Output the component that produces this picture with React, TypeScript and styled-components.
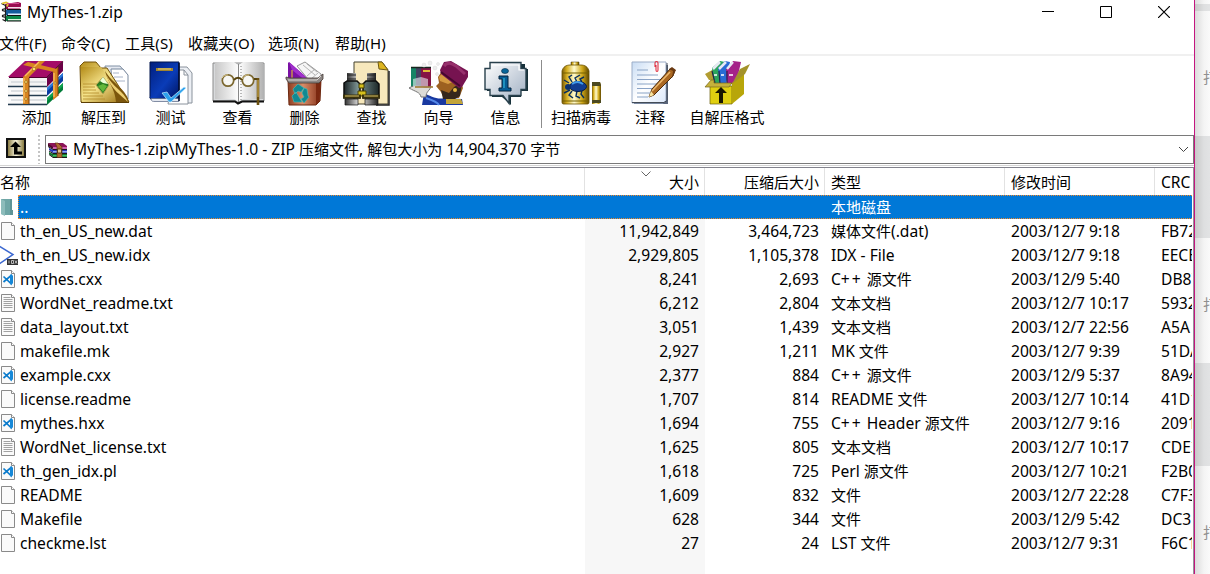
import React from 'react';
import styled, { createGlobalStyle } from 'styled-components';

const Global = createGlobalStyle`
  * { box-sizing: border-box; }
  body { margin: 0; background: #fff; overflow: hidden; }
  svg { display: block; flex: none; }
`;

const Desktop = styled.div`
  display: flex;
  width: 1210px;
  height: 574px;
  overflow: hidden;
  font: 15px/24px "Noto Sans", "Noto Sans CJK SC", sans-serif;
  color: #000;
`;
const Window = styled.div`
  width: 1195px;
  height: 574px;
  border-right: 1px solid #c4157f;
  background: #fff;
  display: flex;
  flex-direction: column;
  overflow: hidden;
`;
const TitleBar = styled.div`
  height: 30px;
  display: flex;
  align-items: flex-start;
`;
const Title = styled.div`
  margin-left: 4px;
  flex: 1;
  line-height: 25px;
`;
const Controls = styled.div`
  display: flex;
  gap: 46px;
  padding: 6px 24px 0 0;
`;
const MenuBar = styled.div`
  display: grid;
  grid-template-columns: 62px 64px 63px 80px 67px 70px;
  height: 26px;
  margin-left: -1px;
  line-height: 26px;
  border-bottom: 2px solid #f0f0f0;
  white-space: nowrap;
`;
const MenuItem = styled.div`
  letter-spacing: 0.15px;
`;
const Toolbar = styled.div`
  display: flex;
  height: 77px;
  padding: 4px 0 0 3px;
`;
const ToolButton = styled.div<{ $w: number }>`
  width: ${(p) => p.$w}px;
  display: flex;
  flex-direction: column;
  align-items: center;
  line-height: 22px;
  white-space: nowrap;
`;
const ToolSeparator = styled.div`
  width: 1px;
  height: 68px;
  margin: 0 2px;
  background: #8c8c8c;
`;
const AddressBar = styled.div`
  display: flex;
  height: 33px;
  padding: 2px 0 0 6px;
  border-bottom: 1px solid #d4d4d4;
`;
const UpArrow = styled.svg`
  margin-top: 3px;
`;
const Grip = styled.div`
  width: 2px;
  height: 29px;
  margin: 0 5px 0 12px;
  background: repeating-linear-gradient(#c4c4c4 0 2px, #fff 2px 4px);
`;
const AddressBox = styled.div`
  flex: 1;
  height: 29px;
  border: 1px solid #7a7a7a;
  display: flex;
  align-items: center;
  padding: 0 4px 0 2px;
`;
const AddressText = styled.div`
  flex: 1;
  margin: 0 0 2px 5px;
  white-space: pre;
`;
const List = styled.div`
  flex: 1;
  margin-top: 1px;
  border-top: 1px solid #82828c;
  border-right: 1px solid #96919a;
  padding-right: 1px;
  display: flex;
  flex-direction: column;
`;
const HeaderRow = styled.div`
  display: grid;
  grid-template-columns: 585px 120px 120px 180px 150px 1fr;
  height: 27px;
  overflow: hidden;
`;
const HeaderCell = styled.div<{ $right?: boolean; $first?: boolean; $last?: boolean }>`
  position: relative;
  border-right: ${(p) => (p.$last ? 0 : 1)}px solid #e2e2e2;
  padding: 2px ${(p) => (p.$last ? 0 : 5)}px 0 ${(p) => (p.$first ? 0 : 6)}px;
  line-height: 24px;
  text-align: ${(p) => (p.$right ? 'right' : 'left')};
  white-space: nowrap;
`;
const SortMark = styled.svg`
  position: absolute;
  left: 56px;
  top: 3px;
`;
const Body = styled.div`
  flex: 1;
  background: linear-gradient(90deg, #fff 585px, #f7f7f7 585px 705px, #fff 705px);
`;
const Row = styled.div`
  display: grid;
  grid-template-columns: 18px 567px 120px 120px 180px 150px 1fr;
  height: 24px;
`;
const ParentRow = styled.div`
  display: flex;
  height: 24px;
`;
const Selected = styled.div`
  flex: 1;
  display: flex;
  background: #0078d7;
  border: 1px dotted #f58a28;
  border-right: 0;
  color: #fff;
  line-height: 23px;
`;
const ParentName = styled.div`
  width: 812px;
  padding-left: 1px;
`;
const Cell = styled.div<{ $right?: boolean; $name?: boolean }>`
  padding: 0 ${(p) => (p.$right ? 6 : 0)}px 0 ${(p) => (p.$name ? 2 : 6)}px;
  text-align: ${(p) => (p.$right ? 'right' : 'left')};
  white-space: pre;
  overflow: hidden;
`;
const Latin = styled.span<{ $plus?: boolean }>`
  font-size: 15.6px;
  letter-spacing: ${(p) => (p.$plus ? 2 : 0)}px;
`;
const Behind = styled.div`
  width: 15px;
  display: flex;
  flex-direction: column;
  background: #e0e0e0;
`;
const Strip = styled.div<{ $h: number; $dark?: boolean; $drop?: number }>`
  height: ${(p) => p.$h}px;
  background: linear-gradient(90deg, ${(p) => (p.$dark ? '#c8c8c8, #dedfe0 60%, #e2e3e4' : '#dcdcdc, #f4f4f4 60%, #fafafa')});
  display: flex;
  align-items: center;
  padding: ${(p) => p.$drop ?? 0}px 0 0 8px;
  overflow: hidden;
  color: #909090;
  white-space: nowrap;
`;

/* Latin runs are set slightly larger than the Chinese ones, and plus signs wider. */
function T({ children }: { children: string }) {
  const runs = children.split(/(\++|[\x20-\x2a\x2c-\x7e]+)/).filter(Boolean);
  return (
    <>
      {runs.map((r, i) => (/^[\x20-\x7e]/.test(r) ? <Latin key={i} $plus={r[0] === '+'}>{r}</Latin> : <span key={i}>{r}</span>))}
    </>
  );
}

const Defs = styled.svg`
  position: absolute;
`;
const Gradients = () => (
  <Defs width="0" height="0">
    <defs>
      <linearGradient id="gold" x1="0" y1="0" x2="1" y2="1">
        <stop offset="0" stopColor="#b48c18" /><stop offset=".45" stopColor="#f6e48c" /><stop offset="1" stopColor="#96690a" />
      </linearGradient>
      <linearGradient id="khaki" x1="0" x2="1">
        <stop offset="0" stopColor="#8a7c44" /><stop offset=".5" stopColor="#f8f4dc" /><stop offset="1" stopColor="#877a40" />
      </linearGradient>
      <linearGradient id="tank" x1="0" x2="1">
        <stop offset="0" stopColor="#7a5c08" /><stop offset=".18" stopColor="#d8b020" /><stop offset=".45" stopColor="#fffbd0" /><stop offset=".75" stopColor="#d0a818" /><stop offset="1" stopColor="#5e4600" />
      </linearGradient>
      <linearGradient id="navy" x1="0" y1="0" x2="1" y2="1">
        <stop offset="0" stopColor="#001e7c" /><stop offset=".55" stopColor="#0a3cb8" /><stop offset="1" stopColor="#001460" />
      </linearGradient>
      <linearGradient id="steel" x1="0" x2="1">
        <stop offset="0" stopColor="#1c2426" /><stop offset=".4" stopColor="#7c9494" /><stop offset="1" stopColor="#1c2828" />
      </linearGradient>
      <linearGradient id="chrome" x1="0" x2="1">
        <stop offset="0" stopColor="#333" /><stop offset=".45" stopColor="#eee" /><stop offset="1" stopColor="#222" />
      </linearGradient>
      <linearGradient id="page" x1="0" x2="1">
        <stop offset="0" stopColor="#c8c8c8" /><stop offset=".5" stopColor="#fff" /><stop offset="1" stopColor="#b4b4b4" />
      </linearGradient>
      <linearGradient id="copper" x1="0" x2="1">
        <stop offset="0" stopColor="#8c3c20" /><stop offset=".45" stopColor="#d88c68" /><stop offset="1" stopColor="#843018" />
      </linearGradient>
      <linearGradient id="glass" x1="0" y1="0" x2="1" y2="1">
        <stop offset="0" stopColor="#fff" /><stop offset="1" stopColor="#9cacc0" />
      </linearGradient>
      <linearGradient id="sheet" x1="0" y1="0" x2="1" y2="1">
        <stop offset="0" stopColor="#c8dcf4" /><stop offset=".5" stopColor="#fff" /><stop offset="1" stopColor="#dce8fa" />
      </linearGradient>
    </defs>
  </Defs>
);

const AddArt = () => (
  <>
    <path d="M7 99h39v6H7z" fill="#e8eaec" /><path d="M46 98l16-15v7l-16 15z" fill="#007c38" />
    <path d="M46 98l16-15v3l-16 15z" fill="#10a450" />
    <path d="M7 88h39v8H7zM7 97h39v6H7z" fill="#fafafa" /><path d="M46 88l16-15v8l-16 15z" fill="#0a3ca0" /><path d="M46 88l16-15v3L46 91z" fill="#2878d8" />
    <path d="M7 78h39v8H7z" fill="#f4f4f4" /><path d="M46 78l16-16v9L46 87z" fill="#6c0048" />
    <path d="M7 77l17-16h38L46 78z" fill="#a40c68" /><path d="M8 77.500h38l16-16" fill="none" stroke="#50002e" strokeWidth="1.2" />
    <path d="M7 86.500h39M7 95.500h39M7 104.500h39" stroke="#243c50" strokeWidth="1.3" /><path d="M10 82h35M10 91h35M10 100h35" stroke="#d4d8dc" strokeWidth="1.5" />
    <path d="M22 77l16-16h6L28 77v27h-6zM27 62l29 7-3 3-31-7zM52 72l5-5v29l-5 4z" fill="#d88420" />
    <path d="M23 78v25M24 76l14-14M53 73v24" stroke="#f8bc60" strokeWidth="1.4" />
    <path d="M28 78v26M57 67v29" stroke="#7c4008" />
    <g fill="#fce070" stroke="#8a5410" strokeWidth=".6"><circle cx="25" cy="82" r="1.4" /><circle cx="25" cy="91" r="1.4" /><circle cx="25" cy="99" r="1.4" /><circle cx="33" cy="69" r="1.8" /><circle cx="54" cy="83" r="1.2" /></g>
  </>
);
const ExtractArt = () => (
  <>
    <path d="M104 66h15l6 7v26h-18z" fill="#e4e8f0" stroke="#8090a4" /><path d="M110 69h12l5 6v24h-15z" fill="#fff" stroke="#77879c" />
    <path d="M112 73h6M113 77h9M113 81h11" stroke="#a8b4c8" />
    <path d="M79 66l4-4h12l5 6h6l22 34H80z" fill="url(#gold)" stroke="#73530a" />
    <path d="M80 67h20l4 6 23 29H81z" fill="url(#gold)" /><path d="M104 71c3 12 10 17 11 31h13c-2-12-16-18-24-31z" fill="#7c560c" /><path d="M105 74c6 13 18 17 22 28-7-7-17-12-22-28z" fill="#edcf72" />
    <path d="M82 84h14M82 87h12M82 90h13M82 93h16M82 96h20M82 99h22" stroke="#b28a28" strokeWidth=".8" />
    <path d="M80 102.500h48" stroke="#5b3d04" />
    <path d="M95 85l7-8 6 8-6 9z" fill="#287c20" stroke="#b0a450" /><path d="M99 81l3-4 5 7-5-1z" fill="#edffd8" /><path d="M97 86l5-2 4 2-4 6z" fill="#62b83c" />
  </>
);
const TestArt = () => (
  <>
    <path d="M178 67h8l5 6v30h-22z" fill="#eceff4" stroke="#8a929c" /><path d="M174 70h9l4 5v29h-20z" fill="#fff" stroke="#8a929c" /><path d="M183 70v5h4" fill="none" stroke="#8a929c" />
    <path d="M149 62h29v37h-27c-3 0-2-2-2-3z" fill="url(#navy)" stroke="#00144c" /><path d="M150 98.500c0 3 2 3 4 3h24v-3z" fill="#e4e8f0" stroke="#526080" strokeWidth=".7" />
    <path d="M178 63v38" stroke="#000c30" strokeWidth="1.5" /><path d="M155 69.500h17" stroke="#a08430" strokeWidth="3" /><path d="M157 69h13" stroke="#e8d478" />
    <path d="M161 93l5-1 4 6 13-11 2 1-15 14h-2z" fill="#2ca0ec" stroke="#c4ebff" strokeWidth=".7" />
  </>
);
const ViewArt = () => (
  <>
    <path d="M212 63v38h22l4 2 4-2h21V63z" fill="#d8dadc" stroke="#8a8a8a" />
    <path d="M214 62h19l4 3v36l-4-2h-19zM238 65l4-3h20v37h-20l-4 2z" fill="url(#page)" /><path d="M237.500 64v38" stroke="#888" /><path d="M240 66v34" stroke="#777" strokeDasharray="1 2" />
    <path d="M212 101.500h22l3 2 4-2h22" fill="none" stroke="#111" strokeWidth="2" />
    <g fill="#f7f7f4" stroke="#7c6830" strokeWidth="1.7"><circle cx="227" cy="80.500" r="5.700" /><circle cx="247" cy="80.500" r="5.700" /></g>
    <path d="M233 80c2-3 6-3 8 0M253 79h5" fill="none" stroke="#55420c" strokeWidth="2" /><path d="M221 78c2-3 5-3 6-3M241 79c2-4 5-4 7-4" fill="none" stroke="#e5d398" />
    <path d="M257 78v27" stroke="#6b5010" strokeWidth="2.600" /><path d="M257 80v17" stroke="#d9b85b" />
  </>
);
const DeleteArt = () => (
  <>
    <path d="M287 81V63l1-1 22 19z" fill="#7a10a4" /><path d="M288 62l20 18-3 1-14-11z" fill="#a030cc" /><path d="M291 70v10" stroke="#ebd020" />
    <path d="M296 66l8-4 16 12 1 6h-13z" fill="#f6f6f6" stroke="#999" /><path d="M302 65l12 10M306 64l10 8M306 76l8-7M310 79l7-6" stroke="#a4a4a4" strokeWidth=".8" />
    <path d="M287 80h33l-1 21-4 4h-27z" fill="url(#copper)" stroke="#6c2810" /><path d="M315 82l5-2-2 22-3 3z" fill="#7b2810" />
    <path d="M285 77l4 1h28l5-4v5l-4 4h-30l-3-4z" fill="#8c8684" stroke="#473c38" strokeWidth=".8" /><path d="M287 80h29l4-4" fill="none" stroke="#d8d4d0" />
    <path d="M292 89l5-5 6 4-3 4-3-1-3 3zM291 96l4-4 3 5 3 5h-8zM303 88l3 1 1 7 1 1-5 6-3-4 3-2-2-4z" fill="#128992" stroke="#48bdb8" strokeWidth=".6" />
  </>
);
const FindArt = () => (
  <>
    <path d="M353 62h28l6 8v34h-34z" fill="#f7e8bc" stroke="#42402f" /><path d="M377 62h4l6 8-9-1z" fill="#ddb520" stroke="#6f5a12" /><path d="M388 71v34h-13" fill="none" stroke="#222" strokeWidth="1.500" />
    <path d="M346 73h9v9h-9zM366 73h9v9h-9z" fill="url(#chrome)" /><path d="M346 75h9M366 75h9M346 79h9M366 79h9" stroke="#222" />
    <path d="M343 83l3-2h10l3 3v14h-16zM362 84l3-3h10l3 3v14h-16z" fill="url(#steel)" stroke="#0c0c0c" strokeWidth="1.500" />
    <path d="M358 84h5v4h-5zM357 91h8v5h-8z" fill="#d7c01c" stroke="#484000" /><path d="M342 96.500h18M361 96.500h18" stroke="#3c340c" strokeWidth="4" /><path d="M344 96h14M363 96h14" stroke="#d9c36a" />
    <path d="M344 99h13v6h-13zM364 99h13v6h-13z" fill="url(#chrome)" stroke="#111" strokeWidth=".700" />
  </>
);
const WizardArt = () => (
  <>
    <path d="M421 105l2-12c6 3 14 7 20 5l18 1 1 6z" fill="#1838a0" /><path d="M425 98c6 2 12 5 13 7" stroke="#5488e8" strokeWidth="2" fill="none" />
    <path d="M437 77l6-9 14 7 5 13-4 10h-15l-3-6-5-6 3-3z" fill="#9c6120" /><path d="M438 77l5-6 10 5 1 5-7 3-8-3z" fill="#d59b42" />
    <path d="M440 90l8 3 5-6 8-5-2 14-5 3h-12z" fill="#35271c" /><circle cx="454" cy="90" r="2" fill="#e8b840" />
    <path d="M439 70l4-8 7-1 17 10v6l-6 10-3 1-18-14z" fill="#761350" /><path d="M443 66c3-4 8-3 12 0l9 8" fill="none" stroke="#97306c" strokeWidth="3" /><path d="M440 72l19 14" stroke="#45072f" strokeWidth="2" />
    <path d="M445 99h15l2 5h-17z" fill="#c2a43a" />
    <path d="M410 67h5v20h-5z" fill="#168465" /><path d="M415 67h5v20h-5z" fill="#424260" /><path d="M420 67h10v20h-10z" fill="#851545" /><path d="M410 67.500h20" stroke="#18251f" strokeWidth="1.500" /><path d="M422 71h7" stroke="#e1bd38" strokeWidth="2" />
    <path d="M408 88c7-5 16 1 22-2-1 5-5 5-5 11h-5c-1-5-5-5-12-9z" fill="#dddcd8" stroke="#777" /><path d="M412 79l8-2 7 2v8h-15z" fill="#e8eef4" opacity=".6" />
    <path d="M414 87h18" stroke="#9e752a" strokeWidth="1.500" /><g fill="#eee" stroke="#ddd" strokeWidth=".5"><circle cx="423" cy="65" r="2" /><circle cx="429" cy="63" r="2" /><circle cx="434" cy="68" r="2" /><circle cx="437" cy="64" r="1.500" /><circle cx="436" cy="74" r="1.500" /></g>
  </>
);
const InfoArt = () => (
  <>
    <path d="M491 64h33v5h3v22h-7v6h-10v8l-9-8h-10v-6h-5V71h5z" fill="#17313a" />
    <path d="M489 62.500h31v6h5v21h-5v6h-12v8l-6-8h-13v-6h-5v-21h5z" fill="url(#glass)" stroke="#28404c" strokeWidth="1.400" />
    <path d="M491 65h27v5h5" fill="none" stroke="#fff" strokeWidth="1.200" />
    <ellipse cx="504" cy="71" rx="3.500" ry="2.500" fill="#08669a" stroke="#05243c" strokeWidth=".6" /><path d="M498 76h9v12h3v3h-12v-3h3v-9h-3z" fill="#075c94" stroke="#04233c" />
    <path d="M503 78v10" stroke="#26a3ce" strokeWidth="1.500" />
  </>
);
const VirusArt = () => (
  <>
    <path d="M572 62h8v5h-8z" fill="url(#tank)" stroke="#453500" strokeWidth=".5" /><path d="M563 71c1-4 4-6 8-6h11c4 0 7 2 8 6v31c0 2-1 2-2 2h-23c-1 0-2 0-2-2z" fill="url(#tank)" stroke="#6a5000" strokeWidth=".8" />
    <path d="M563 73h27M563 101h27" stroke="#756100" strokeWidth="1.200" />
    <path d="M593 82h8l1 3v17l-2 2h-7z" fill="url(#tank)" /><path d="M593 82h8l1 4h-9zM593 100h9v3h-9z" fill="#4c4920" />
    <path d="M570 83l-5-3M571 90l-6 3M573 82l-3-5 3-2M578 82l-2-4 5-3M583 82l-2-3 4-2M573 91l-3 4 4 3M578 91l-1 5 4 2M583 91l-1 3 3 4" fill="none" stroke="#082f5f" strokeWidth="1.400" />
    <ellipse cx="579" cy="86.500" rx="8.500" ry="5" fill="#123d90" stroke="#031945" /><circle cx="569" cy="87" r="3" fill="#0c326f" /><path d="M573 84c4-3 8-2 11 0" stroke="#429bea" strokeWidth="2" fill="none" />
  </>
);
const CommentArt = () => (
  <>
    <path d="M635 65h34v39h-34z" fill="#59657a" /><path d="M633 62h34v39l-3 2h-31z" fill="url(#sheet)" stroke="#9cadc7" /><path d="M633 102.500h32l3-2V63" fill="none" stroke="#444c58" />
    <path d="M638 70h11M638 75h21M638 79.500h23M638 84h22M638 88.500h16M638 93h13M638 97h11" stroke="#8aa3c6" strokeWidth="1.200" />
    <path d="M656 67v-4c0-2 3-2 3 0v7c0 2-2 2-2 0v-5" fill="none" stroke="#e03040" strokeWidth="1.100" />
    <path d="M650 97l3-8 18-20 5 1-2 6-19 19z" fill="#aa6822" stroke="#4b2a0b" /><path d="M653 91l18-19" stroke="#edb96d" strokeWidth="1.500" /><path d="M670 69l3-2 4 3-4 8 1-7z" fill="#6a3a12" /><path d="M650 97l2-6 3 4z" fill="#fae5a0" />
  </>
);
const SfxArt = () => (
  <>
    <path d="M706 74l9-5v11h-5z" fill="#b29c31" />
    <path d="M713 68l8-7 5 1-3 22h-8z" fill="#2ba45c" /><path d="M719 68l7-7 5 1-4 23h-6z" fill="#286bd4" /><path d="M727 69l7-8 8 1-5 22h-9z" fill="#a52189" />
    <path d="M714 69l7-7M720 69l7-7M728 69l6-7" stroke="#e7e8f3" strokeWidth="2.500" /><path d="M713 71l3 12M720 71l1 13M728 71l0 14" stroke="#23244c" strokeWidth="1.200" /><path d="M715 75h3M722 75h3M730 75h4" stroke="#fff" strokeWidth="1.500" />
    <path d="M711 86h22v18h-22z" fill="#e0cf10" stroke="#675b0c" strokeWidth=".7" /><path d="M733 83l12-10v21l-12 10z" fill="#b8a60a" /><path d="M706 87l6-7h3v3h18l-3 4z" fill="#c6b13b" stroke="#75671a" strokeWidth=".7" />
    <path d="M733 84l8-15 10-5-5 10z" fill="#a3922a" /><path d="M722 87l6 6h-4v10h-4V93h-4z" fill="#191600" />
  </>
);

const tools = [
  { label: '添加', c: 36, w: 67, art: AddArt },
  { label: '解压到', c: 103, w: 67, art: ExtractArt },
  { label: '测试', c: 170, w: 67, art: TestArt },
  { label: '查看', c: 237, w: 67, art: ViewArt },
  { label: '删除', c: 304, w: 67, art: DeleteArt },
  { label: '查找', c: 371, w: 67, art: FindArt },
  { label: '向导', c: 438, w: 67, art: WizardArt },
  { label: '信息', c: 505, w: 67, art: InfoArt },
];
const extraTools = [
  { label: '扫描病毒', c: 582, w: 74, art: VirusArt },
  { label: '注释', c: 651, w: 64, art: CommentArt },
  { label: '自解压格式', c: 728, w: 90, art: SfxArt },
];

function Tool({ label, c, w, art: Art }: (typeof tools)[number]) {
  return (
    <ToolButton $w={w}>
      <svg width="60" height="46" viewBox={`${c - 30} 60 60 46`}><Art /></svg>
      {label}
    </ToolButton>
  );
}

const BooksIcon = () => (
  <svg width="23" height="23" viewBox="0 0 23 23">
    <path d="M5 4l13-2 3 1v3l-1 3H6z" fill="#980c50" /><path d="M8 7h13v1.500H8z" fill="#f4dcea" />
    <path d="M5 9l3 1h13v5H6z" fill="#145c9c" /><path d="M8 13.500h13V15H8z" fill="#dcecff" />
    <path d="M5 15l3 1h13v5H6z" fill="#0c8848" /><path d="M8 19h13v1.500H8z" fill="#d8f4dc" />
    <path d="M7 9.500h14M7 15.500h14M7 21h14" stroke="#111" strokeWidth="1.200" />
    <path d="M1.500 3.500l4 2v3l-3 1v1l3 1v3l-3 1v1l3 1v3.500l-3-1.500M5.500 5.500v15" fill="none" stroke="#1c1c1c" strokeWidth="1.200" />
    <path d="M2 3.500l4-1 2 1-1 3" fill="none" stroke="#e0c028" strokeWidth="1.800" /><path d="M7 3.500h12" stroke="#d04890" />
  </svg>
);
const ArchiveIcon = () => (
  <svg width="20" height="16" viewBox="0 0 20 16">
    <path d="M0 1h15l4 3v2H5z" fill="#8c1458" /><path d="M0 1l5 4v2L0 4z" fill="#50082c" /><path d="M5 5h14v2H5z" fill="#d060b0" />
    <path d="M1 6l4 2h14v3H5L1 8z" fill="#2838b8" /><path d="M5 9h14v1.500H5z" fill="#90a8f0" />
    <path d="M1 10l4 2h14v3H5l-4-3z" fill="#107030" /><path d="M5 13h14v1.500H5z" fill="#40c060" />
    <path d="M0 4.500l5 3h14M1 9l4 2.500h14M1 12.500l4 3h14" fill="none" stroke="#181818" />
    <path d="M7 1h3l4 4v10.500H9V5z" fill="#b06c30" stroke="#582c10" strokeWidth=".6" /><path d="M9.500 7h4v4h-4z" fill="#e8c888" stroke="#402408" strokeWidth=".8" />
  </svg>
);

const FileSvg = styled.svg`
  margin: 2px 0 0 0;
`;
function FileIcon({ kind }: { kind: string }) {
  if (kind === 'idx')
    return (
      <FileSvg width="18" height="22" viewBox="0 0 18 22">
        <path d="M-1 1L13 9.500L-1 19" fill="#fff" stroke="#3c68d0" strokeWidth="1.500" /><path d="M7 14h11v6H7z" fill="#333" />
        <path d="M9 15.500v3M11.500 15.500v3h2v-3zM15 15.500l2 3M17 15.500l-2 3" fill="none" stroke="#ddd" strokeWidth=".8" />
      </FileSvg>
    );
  return (
    <FileSvg width="18" height="20" viewBox="0 0 18 20">
      <path d="M1.500 1.500h10l3 3v14h-13z" fill="#fafafa" stroke="#8a8a8a" /><path d="M11.500 1.500v3h3" fill="#fff" stroke="#8a8a8a" />
      {kind === 'txt' && <path d="M3.500 4.500h7M3.500 6.500h9M3.500 8.500h9M3.500 10.500h9M3.500 12.500h9M3.500 14.500h9" stroke="#a2a2a2" />}
      {kind === 'code' && <path d="M3.500 7.500l7.500 7V6.500l-7.500 6.500" fill="none" stroke="#0a7bcc" strokeWidth="1.700" />}
      {kind === 'code' && <path d="M10 5.500l3 1v8l-3 1z" fill="#1688d8" />}
    </FileSvg>
  );
}

const files = [
  ['', 'th_en_US_new.dat', '11,942,849', '3,464,723', '媒体文件(.dat)', '2003/12/7 9:18', 'FB72'],
  ['idx', 'th_en_US_new.idx', '2,929,805', '1,105,378', 'IDX - File', '2003/12/7 9:18', 'EECE'],
  ['code', 'mythes.cxx', '8,241', '2,693', 'C++ 源文件', '2003/12/9 5:40', 'DB87'],
  ['txt', 'WordNet_readme.txt', '6,212', '2,804', '文本文档', '2003/12/7 10:17', '5932'],
  ['txt', 'data_layout.txt', '3,051', '1,439', '文本文档', '2003/12/7 22:56', 'A5A'],
  ['', 'makefile.mk', '2,927', '1,211', 'MK 文件', '2003/12/7 9:39', '51DA'],
  ['code', 'example.cxx', '2,377', '884', 'C++ 源文件', '2003/12/9 5:37', '8A94'],
  ['', 'license.readme', '1,707', '814', 'README 文件', '2003/12/7 10:14', '41D1'],
  ['code', 'mythes.hxx', '1,694', '755', 'C++ Header 源文件', '2003/12/7 9:16', '2091'],
  ['txt', 'WordNet_license.txt', '1,625', '805', '文本文档', '2003/12/7 10:17', 'CDE3'],
  ['code', 'th_gen_idx.pl', '1,618', '725', 'Perl 源文件', '2003/12/7 10:21', 'F2B0'],
  ['', 'README', '1,609', '832', '文件', '2003/12/7 22:28', 'C7F3'],
  ['', 'Makefile', '628', '344', '文件', '2003/12/9 5:42', 'DC3'],
  ['', 'checkme.lst', '27', '24', 'LST 文件', '2003/12/7 9:31', 'F6C1'],
];

export default function App() {
  return (
    <Desktop>
      <Global />
      <Gradients />
      <Window>
        <TitleBar>
          <BooksIcon />
          <Title><T>MyThes-1.zip</T></Title>
          <Controls>
            <svg width="12" height="12" viewBox="0 0 12 12"><path d="M0 5.500h12" stroke="#000" /></svg>
            <svg width="12" height="12" viewBox="0 0 12 12"><path d="M.5.5h11v11H.5z" fill="none" stroke="#000" /></svg>
            <svg width="12" height="12" viewBox="0 0 12 12"><path d="M0 0l12 12M12 0L0 12" stroke="#000" strokeWidth="1.200" /></svg>
          </Controls>
        </TitleBar>
        <MenuBar>
          {['文件(F)', '命令(C)', '工具(S)', '收藏夹(O)', '选项(N)', '帮助(H)'].map((m) => <MenuItem key={m}>{m}</MenuItem>)}
        </MenuBar>
        <Toolbar>
          {tools.map((t) => <Tool key={t.label} {...t} />)}
          <ToolSeparator />
          {extraTools.map((t) => <Tool key={t.label} {...t} />)}
        </Toolbar>
        <AddressBar>
          <UpArrow width="20" height="20" viewBox="0 0 20 20">
            <rect width="20" height="20" fill="#111" /><rect x="2" y="2" width="16" height="16" fill="url(#khaki)" />
            <path d="M9.500 3.500l5.500 5.500h-3.500v4.500H16v3H8V9H4z" fill="#000" />
          </UpArrow>
          <Grip />
          <AddressBox>
            <ArchiveIcon />
            <AddressText><T>MyThes-1.zip\MyThes-1.0 - ZIP 压缩文件, 解包大小为 14,904,370 字节</T></AddressText>
            <svg width="11" height="7" viewBox="0 0 11 7"><path d="M1 1l4.500 4.500L10 1" fill="none" stroke="#444" /></svg>
          </AddressBox>
        </AddressBar>
        <List>
          <HeaderRow>
            <HeaderCell $first>名称</HeaderCell>
            <HeaderCell $right>
              <SortMark width="10" height="6" viewBox="0 0 10 6"><path d="M.5.5L5 5 9.500.5" fill="none" stroke="#666" /></SortMark>
              大小
            </HeaderCell>
            <HeaderCell $right>压缩后大小</HeaderCell>
            <HeaderCell>类型</HeaderCell>
            <HeaderCell>修改时间</HeaderCell>
            <HeaderCell $last><T>CRC</T></HeaderCell>
          </HeaderRow>
          <Body>
            <ParentRow>
              <svg width="18" height="24" viewBox="0 0 18 24"><path d="M1 4h9l2 1v15H4L1 19z" fill="#6fa6a6" /><path d="M1 4l4 2v15l-4-2z" fill="#8dbcbb" /><path d="M10 4h2v11h1v5h-3z" fill="#5f9496" /></svg>
              <Selected>
                <ParentName><T>..</T></ParentName>
                <div>本地磁盘</div>
              </Selected>
            </ParentRow>
            {files.map((f) => (
              <Row key={f[1]}>
                <FileIcon kind={f[0]} />
                <Cell $name><T>{f[1]}</T></Cell>
                <Cell $right><T>{f[2]}</T></Cell>
                <Cell $right><T>{f[3]}</T></Cell>
                <Cell><T>{f[4]}</T></Cell>
                <Cell><T>{f[5]}</T></Cell>
                <Cell><T>{f[6]}</T></Cell>
              </Row>
            ))}
          </Body>
        </List>
      </Window>
      <Behind>
        <Strip $h={4} />
        <Strip $h={7} $dark />
        <Strip $h={125} $drop={7}>打</Strip>
        <Strip $h={102} $dark />
        <Strip $h={125} $drop={6}>打</Strip>
        <Strip $h={103} $dark />
        <Strip $h={108} $drop={24}>打</Strip>
      </Behind>
    </Desktop>
  );
}
